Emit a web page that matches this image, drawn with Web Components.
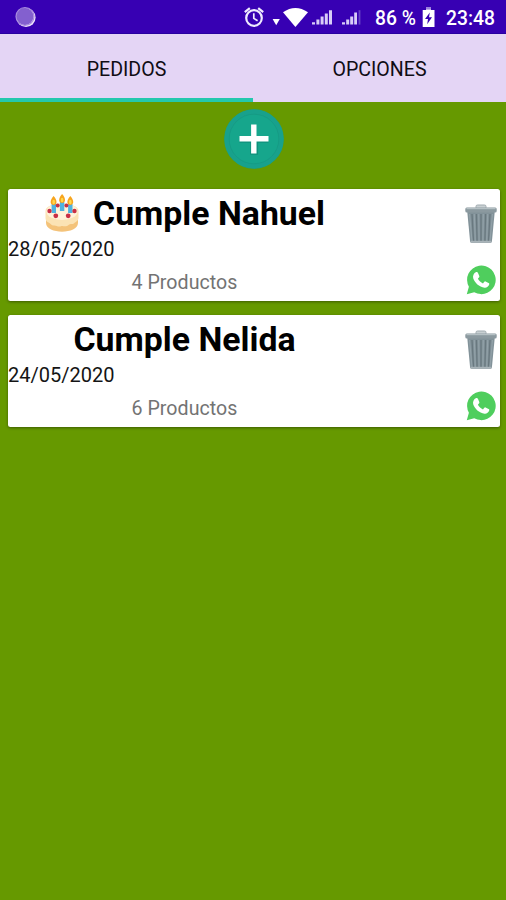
<!DOCTYPE html>
<html lang="es">
<head>
<meta charset="utf-8">
<title>Pedidos</title>
<style>
  html, body {
    margin: 0;
    height: 100%;
    overflow: hidden;
    background: #669900;
    font-family: Roboto, "Liberation Sans", sans-serif;
  }
</style>
</head>
<body>
<orders-screen>
  <status-bar slot="status" battery="86 %" time="23:48"></status-bar>
  <tab-bar slot="tabs">
    <tab-item selected>PEDIDOS</tab-item>
    <tab-item>OPCIONES</tab-item>
  </tab-bar>
  <add-button></add-button>
  <order-card date="28/05/2020" count="4 Productos"><cake-icon></cake-icon><span>Cumple Nahuel</span></order-card>
  <order-card date="24/05/2020" count="6 Productos"><span>Cumple Nelida</span></order-card>
</orders-screen>

<script>
class BaseElement extends HTMLElement {
  constructor() {
    super();
    this.attachShadow({ mode: 'open' });
  }

  connectedCallback() {
    this.shadowRoot.innerHTML = this.render();
  }
}

class OrdersScreen extends BaseElement {
  render() {
    return `
      <style>
        :host { display: flex; flex-direction: column; height: 100%; }
        main {
          display: flex;
          flex-direction: column;
          gap: 14px;
          padding: 7px 6px 0 8px;
        }
      </style>
      <slot name="status"></slot>
      <slot name="tabs"></slot>
      <main><slot></slot></main>
    `;
  }
}

class StatusBar extends BaseElement {
  render() {
    return `
      <style>
        :host {
          display: flex;
          align-items: center;
          box-sizing: border-box;
          height: 34px;
          padding: 0 11px 0 15px;
          background: #3700b3;
          border-bottom: 1px solid #2800a0;
          color: #fff;
          font-size: 19.3px;
          font-weight: 500;
          white-space: nowrap;
        }
        svg { display: block; flex: none; }
        .space { flex: 1; }
        .battery { width: 42px; margin-left: 13px; }
        .cell { margin: 0 11px 0 5px; }
        span { padding-top: 3px; }
      </style>
      <svg width="22" height="22" viewBox="0 0 22 22">
        <circle cx="11" cy="11.5" r="9.6" fill="#eee4fa"/>
        <circle cx="9.9" cy="10.3" r="8.6" fill="#8360cf"/>
        <circle cx="10" cy="10.5" r="9" fill="none" stroke="#a78ade" stroke-width="1.2"/>
      </svg>
      <div class="space"></div>
      <svg width="118" height="24" viewBox="244 5 118 24" fill="#fff">
        <circle cx="254" cy="18" r="7.8" fill="none" stroke="#efeaff" stroke-width="2.2"/>
        <path d="M244.8 12.2l5-4M258.2 8.2l5 4" stroke="#efeaff" stroke-width="2.2"/>
        <path d="M253.8 13.2v5.2l3.8 2.4" fill="none" stroke="#efeaff" stroke-width="1.7"/>
        <path d="M272.6 19h7.2l-3.6 6.2z"/>
        <path d="M283 12.3Q295.4 3.6 308 12.3L295.4 27z"/>
        <g fill="#d8ccf7">
          <path d="M312 22.2h3v2.4h-3zM316.4 19.6h3v5h-3zM320.6 16.6h3v8h-3zM324.8 13.4h3v11.2h-3zM329 10.2h3v14.4h-3z"/>
          <path d="M342 22.2h3v2.4h-3zM346.2 19.6h3v5h-3zM350.2 16.6h3v8h-3zM354.2 12.6h2.8v12h-2.8z"/>
          <path d="M358.6 10.2h1.8v14.4h-1.8z" fill="#6845c5"/>
        </g>
      </svg>
      <span class="battery">${this.getAttribute('battery')}</span>
      <svg class="cell" width="13" height="22" viewBox="0 0 13 22">
        <path d="M4 1h5v3h3.5v17H.7V4H4z" fill="#fff"/>
        <path d="M4 1h5v2.6H4z" fill="#9a80dc"/>
        <path d="M7.8 6.5L3 13h3l-.8 5.2L10 11.3H7z" fill="#3700b3"/>
      </svg>
      <span>${this.getAttribute('time')}</span>
    `;
  }
}

class TabBar extends BaseElement {
  render() {
    return `
      <style>
        :host { display: flex; height: 68px; background: #e4d5f5; }
      </style>
      <slot></slot>
    `;
  }
}

class TabItem extends BaseElement {
  render() {
    return `
      <style>
        :host {
          display: flex;
          flex: 1;
          align-items: center;
          justify-content: center;
          box-sizing: border-box;
          padding-top: 7px;
          border-bottom: 4px solid transparent;
          color: #100c14;
          font-size: 19.6px;
          line-height: 24px;
        }
        :host([selected]) { border-bottom-color: #24c8ad; }
      </style>
      <slot></slot>
    `;
  }
}

class AddButton extends BaseElement {
  render() {
    return `
      <style>
        :host { display: block; align-self: center; height: 60px; margin-bottom: 6px; }
        svg { display: block; }
      </style>
      <svg width="60" height="60" viewBox="0 0 60 60" role="img" aria-label="Agregar">
        <circle cx="30" cy="30" r="29.8" fill="#1a9f80"/>
        <circle cx="30" cy="30" r="27.2" fill="none" stroke="#18a18c" stroke-width="4.6"/>
        <circle cx="30" cy="30" r="24.8" fill="#16a68c" stroke="#169783" stroke-width=".6"/>
        <path d="M15.5 33H27V45H33.3V33H44.5" fill="none" stroke="#0b8270" stroke-width="1.5" opacity=".6"/>
        <path d="M27.1 15.5h5.4v11.6h12v5.4h-12v12h-5.4v-12H15.5v-5.4h11.6z" fill="#fff"/>
      </svg>
    `;
  }
}

class OrderCard extends BaseElement {
  render() {
    return `
      <style>
        :host {
          display: flex;
          justify-content: space-between;
          box-sizing: border-box;
          height: 112px;
          border-radius: 2.5px;
          background: #fff;
          box-shadow: 0 1px 3px rgba(0, 0, 0, .4);
          color: #000;
        }
        .info { display: flex; flex-direction: column; width: 353px; }
        .title {
          display: flex;
          align-items: center;
          justify-content: center;
          gap: 13px;
          height: 48px;
          font-size: 33.8px;
          font-weight: 700;
          white-space: nowrap;
        }
        .date { height: 24px; font-size: 20px; line-height: 24px; color: #151515; }
        .count {
          margin-top: 10px;
          font-size: 19.6px;
          line-height: 24px;
          letter-spacing: .05px;
          text-align: center;
          color: #737373;
        }
        .actions {
          display: flex;
          flex-direction: column;
          align-items: center;
          gap: 21px;
          padding: 15px 3px 0 0;
        }
        svg { display: block; }
      </style>
      <div class="info">
        <div class="title"><slot></slot></div>
        <div class="date">${this.getAttribute('date')}</div>
        <div class="count">${this.getAttribute('count')}</div>
      </div>
      <div class="actions">
        <svg width="32" height="40" viewBox="0 0 32 40" role="img" aria-label="Eliminar">
          <path d="M11 4V2.4Q11 1 12.5 1h7Q21 1 21 2.4V4" fill="#c9d0d3" stroke="#a1abb0"/>
          <path d="M2.3 8h27.4l-2.8 29.5q-.2 1.3-1.6 1.3H6.7q-1.4 0-1.6-1.3z" fill="#829299"/>
          <path d="M7 10l1.5 27M11.400 10l.7 27M16 10v27M20.600 10l-.7 27M25 10l-1.500 27" stroke="#69787f" stroke-width="1.3"/>
          <path d="M4.500 10L7 37M9.300 10l1 27M13.700 10l.4 27M18.300 10l-.4 27M22.700 10l-1 27M27.500 10L25 37" stroke="#94a3aa" stroke-width="1"/>
          <path d="M5.5 37.6h21" stroke="#a9b4b9" stroke-width="1.6"/>
          <rect x=".3" y="3.5" width="31.4" height="5" rx="1.6" fill="#8b999f"/>
          <path d="M1.5 4.5h29" stroke="#b5c0c4" stroke-width="1.4"/>
        </svg>
        <svg width="30" height="30" viewBox="0 0 30 30" role="img" aria-label="WhatsApp">
          <path d="M.8 29.3l2.1-7.5A14.3 14.3 0 1 1 8.2 27.2z" fill="#4fce5d"/>
          <path d="M10.2 7.1c.9-.3 1.4 0 1.8.8l1.3 3c.3.8-.1 1.3-1.4 2.8 1.2 2.2 2.9 3.7 5.1 4.7 1.3-1.5 1.7-2.3 2.5-2l3.1 1.5c.8.4.8.8.6 1.6-.6 2.2-2.7 3.4-4.6 3.2-5.6-.9-9.8-4.6-11.4-9.4-.6-2.3.4-5.1 3-6.2z" fill="#fff"/>
        </svg>
      </div>
    `;
  }
}

class CakeIcon extends BaseElement {
  render() {
    return `
      <style>
        :host { display: block; width: 36px; height: 40px; }
        svg { display: block; }
      </style>
      <svg width="36" height="40" viewBox="0 0 36 40">
        <path d="M2 18v12c0 11.500 32 11.500 32 0V18z" fill="#f4c37a"/>
        <path d="M1.500 18c0-10 33-10 33 0v7c0 2.500-3 4-4 5-2 2-4 0-6 2-3 2.500-5 .5-7 1-3 1.500-5-.5-7-.5-3 .5-4-2-6-3-2-1-3-2-3-4.500z" fill="#fbe3b4"/>
        <ellipse cx="18" cy="18.500" rx="15.500" ry="8.500" fill="#fff3da"/>
        <g fill="#4fb3e0">
          <path d="M7.600 11h4.400v9H7.600zM15.900 9h4.400v9h-4.400zM24.100 11h4.400v9h-4.400z"/>
        </g>
        <g fill="#c82f45">
          <circle cx="5.500" cy="18" r="2.200"/><circle cx="11.800" cy="22.800" r="2.400"/>
          <circle cx="24.200" cy="22.800" r="2.400"/><circle cx="30.500" cy="18" r="2.200"/>
          <circle cx="13.700" cy="12.500" r="2"/><circle cx="22.400" cy="12.500" r="2"/>
        </g>
        <g fill="#f7a51f">
          <path d="M9.600 3c4.500 5 3.200 9 0 9s-4.500-4 0-9zM18.100 1c4.500 5 3.200 9 0 9s-4.500-4 0-9zM26.300 3c4.500 5 3.200 9 0 9s-4.500-4 0-9z"/>
        </g>
        <g fill="#ffd84c">
          <ellipse cx="9.700" cy="9" rx="1.300" ry="2.200"/><ellipse cx="18.100" cy="7" rx="1.300" ry="2.200"/><ellipse cx="26.300" cy="9" rx="1.300" ry="2.200"/>
        </g>
      </svg>
    `;
  }
}

customElements.define('orders-screen', OrdersScreen);
customElements.define('status-bar', StatusBar);
customElements.define('tab-bar', TabBar);
customElements.define('tab-item', TabItem);
customElements.define('add-button', AddButton);
customElements.define('order-card', OrderCard);
customElements.define('cake-icon', CakeIcon);
</script>
</body>
</html>
